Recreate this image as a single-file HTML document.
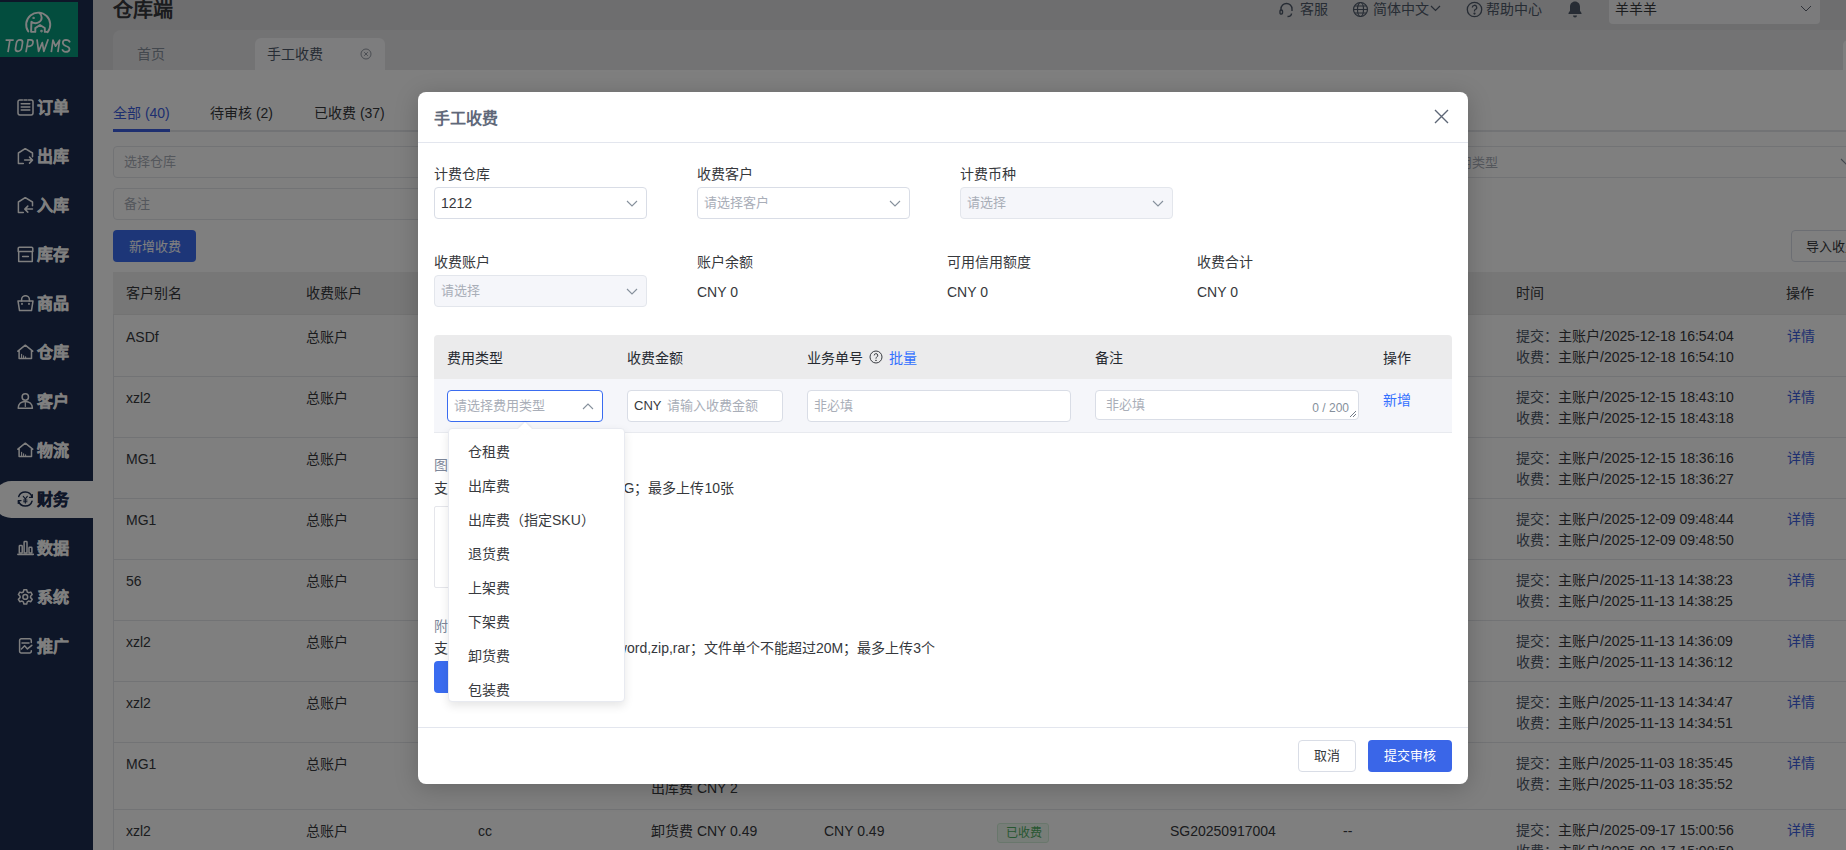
<!DOCTYPE html>
<html lang="zh-CN"><head><meta charset="utf-8"><style>
*{box-sizing:border-box;margin:0;padding:0}
html,body{width:1846px;height:850px;overflow:hidden;background:#fff;font-family:"Liberation Sans",sans-serif;font-size:14px;color:#36383c;position:relative}
.abs{position:absolute}
.t{position:absolute;white-space:nowrap}
#side{position:absolute;left:0;top:0;width:93px;height:850px;background:#1c2c50}
#logo{position:absolute;left:0;top:2px;width:78px;height:55px;background:#069a7c}
.mi{position:absolute;left:0;width:93px;height:37px;color:#fff;font-weight:bold;font-size:16px;line-height:37px}
.mi svg{position:absolute;left:17px;top:10px}
.mi span{position:absolute;left:37px;top:0;-webkit-text-stroke:0.3px currentColor}
.mi.act{background:#fff;color:#1c2c50;border-radius:19px 0 0 19px;left:-7px;width:100px}
.mi.act svg{left:24px}
.mi.act span{left:44px}
#hdr{position:absolute;left:93px;top:0;width:1753px;height:30px;background:#dcdcde}
#tabbar{position:absolute;left:93px;top:30px;width:1753px;height:40px;background:#dcdcde}
#tabc{position:absolute;left:113px;top:30px;width:1733px;height:40px;background:#e6e6e8;border-radius:8px 0 0 0}
#acttab{position:absolute;left:255px;top:38px;width:130px;height:32px;background:#fafafc;border-radius:6px 6px 0 0}
.ph{color:#a9aeb8}
.inp{position:absolute;border:1px solid #e5e6eb;border-radius:4px;background:#fff}
.blue{color:#3c5ee0}
#ov{position:absolute;left:0;top:0;width:1846px;height:850px;background:rgba(0,0,0,.5)}
#modal{position:absolute;left:418px;top:92px;width:1050px;height:692px;background:#fff;border-radius:8px;box-shadow:0 4px 24px rgba(0,0,0,.2)}
.lbl{position:absolute;white-space:nowrap;color:#36383c;font-size:14px;line-height:20px}
.sel{position:absolute;height:32px;border:1px solid #d9dde6;border-radius:4px;background:#fff}
.sel.dis{background:#f5f6fa;border-color:#e3e6ec}
.sel .v{position:absolute;left:6px;top:0;line-height:30px;font-size:13px;white-space:nowrap}
.chev{position:absolute;right:8px;top:12px}
#dd{position:absolute;left:448px;top:428px;width:177px;height:274px;background:#fff;border:1px solid #e8eaf0;border-radius:4px;box-shadow:0 4px 10px rgba(0,0,0,.1)}
#ddin{position:absolute;left:-1px;top:-1px;width:177px;height:274px;overflow:hidden;border-radius:4px}

</style></head><body>
<div id="side">
<div id="logo"></div>
<svg class="abs" style="left:0;top:0" width="80" height="60" viewBox="0 0 80 60" fill="none" stroke="#fff" stroke-width="1.9" stroke-linecap="round" stroke-linejoin="round">
  <path d="M28.3 31.5A12.05 12.05 0 1 1 47.6 32.2"/>
  <path d="M39.3 12.8C42.3 15 42.6 19.8 39.2 22C36.5 23.8 33.3 23.2 31.4 21.8L31.1 31.9H35.3V28.1L40 25L44.8 28V31.9H47.3"/>
  <circle cx="33.6" cy="17.9" r="0.45" stroke-width="1.5"/><circle cx="41.5" cy="31.1" r="0.5" stroke-width="1.6"/>
  <g stroke-width="1.7" stroke-linecap="butt" stroke-linejoin="miter">
   <path d="M5.6 40.1H13.7M9.9 40.1L8 52.2"/>
   <g transform="translate(0,52.2) skewX(-9.7)"><rect x="14.85" y="-12.25" width="6.1" height="11.4" rx="3.05"/>
   <path d="M26 0V-12.3H28.2A3.2 3.2 0 0 1 28.2 -5.9H26"/></g>
   <path d="M37 39.3L38.6 51.4L42.3 42.6L43.8 51.4L48.2 39.3" stroke-linejoin="round"/>
   <path d="M51.3 52.2L53 40.1L55.5 46.2L59.6 40.1L57.9 52.2" stroke-linejoin="round"/>
   <path d="M70 42.4C69.2 40.4 67.3 39.9 66 39.9C63.8 40 62.8 41.4 62.8 42.8C62.8 45 64.6 45.6 66.5 46.2C68.6 46.8 69.6 47.6 69.5 49.3C69.3 51.4 67.3 51.9 65.6 51.9C63.9 51.8 62.8 51.1 62.2 49.3"/>
  </g>
</svg>
<div class="mi" style="top:89px"><svg width="17" height="17" viewBox="0 0 17 17" fill="none" stroke="#fff" stroke-width="1.5" stroke-linecap="round" stroke-linejoin="round"><path d="M5.5 1H2.8A1.8 1.8 0 0 0 1 2.8v11.3a1.8 1.8 0 0 0 1.8 1.8h11.4a1.8 1.8 0 0 0 1.8-1.8V2.8A1.8 1.8 0 0 0 14.2 1H11.5M7 1h3"/><path d="M4.2 4.8h8.6M4.2 7.9h8.6M4.2 11h8.6"/></svg><span>订单</span></div>
<div class="mi" style="top:138px"><svg width="17" height="17" viewBox="0 0 17 17" fill="none" stroke="#fff" stroke-width="1.5" stroke-linecap="round" stroke-linejoin="round"><path d="M6.3 15.4H1.4V5L8.2 0.6L15.5 5V8.8"/><path d="M7.6 12.1H15.3M12.5 9.1l3 3-3 3"/></svg><span>出库</span></div>
<div class="mi" style="top:187px"><svg width="17" height="17" viewBox="0 0 17 17" fill="none" stroke="#fff" stroke-width="1.5" stroke-linecap="round" stroke-linejoin="round"><path d="M6.3 15.4H1.4V5L8.2 0.6L15.5 5V8.8"/><path d="M15.5 12.1H8M10.8 9.1l-3 3 3 3"/></svg><span>入库</span></div>
<div class="mi" style="top:236px"><svg width="17" height="17" viewBox="0 0 17 17" fill="none" stroke="#fff" stroke-width="1.5" stroke-linecap="round" stroke-linejoin="round"><path d="M1.2 5.6V2.4a1.2 1.2 0 0 1 1.2-1.2h12.2a1.2 1.2 0 0 1 1.2 1.2V5.6z"/><path d="M1.7 5.6V15.4H15.3V5.6M5.6 10.6h5.8"/></svg><span>库存</span></div>
<div class="mi" style="top:285px"><svg width="17" height="17" viewBox="0 0 17 17" fill="none" stroke="#fff" stroke-width="1.5" stroke-linecap="round" stroke-linejoin="round"><path d="M4.6 5.9V4.6a3.9 3.9 0 0 1 7.8 0v1.3"/><path d="M1 5.9H16L14.5 15.6H2.5z"/><path d="M5 8.7v.3M12 8.7v.3" stroke-width="1.8"/></svg><span>商品</span></div>
<div class="mi" style="top:334px"><svg width="17" height="17" viewBox="0 0 17 17" fill="none" stroke="#fff" stroke-width="1.5" stroke-linecap="round" stroke-linejoin="round"><path d="M0.9 7.2L8.3 1.2L15.7 7.2M2.1 6.2V14.6H14.5V6.2"/><path d="M4.6 10.2v3.6M6.6 11.8v2M8.6 12.8v1" stroke-width="1.1"/></svg><span>仓库</span></div>
<div class="mi" style="top:383px"><svg width="17" height="17" viewBox="0 0 17 17" fill="none" stroke="#fff" stroke-width="1.5" stroke-linecap="round" stroke-linejoin="round"><circle cx="8.3" cy="4" r="3.2"/><path d="M1.2 15.3C1.2 10.8 4.4 8.4 8.3 8.4S15.4 10.8 15.4 15.3Z"/><path d="M8.3 9.6v3.8" stroke-width="1.2"/></svg><span>客户</span></div>
<div class="mi" style="top:432px"><svg width="17" height="17" viewBox="0 0 17 17" fill="none" stroke="#fff" stroke-width="1.5" stroke-linecap="round" stroke-linejoin="round"><path d="M0.9 7.2L8.3 1.2L15.7 7.2M2.1 6.2V14.6H14.5V6.2"/><path d="M4.6 10.2v3.6M6.6 11.8v2M8.6 12.8v1" stroke-width="1.1"/></svg><span>物流</span></div>
<div class="mi act" style="top:481px"><svg width="17" height="17" viewBox="0 0 17 17" fill="none" stroke="#1c2c50" stroke-width="1.5" stroke-linecap="round" stroke-linejoin="round"><path d="M15 6A7 7 0 0 0 1.7 5.5M1.6 10A7 7 0 0 0 15 10.2"/><path d="M15.3 3.6V6.4H12.6M1.3 12.4V9.6H4" stroke-width="1.3"/><path d="M6.3 5.3l2 2.6 2-2.6M8.3 7.9v4.2M6.6 9h3.4M6.6 10.7h3.4" stroke-width="1.1"/></svg><span>财务</span></div>
<div class="mi" style="top:530px"><svg width="17" height="17" viewBox="0 0 17 17" fill="none" stroke="#fff" stroke-width="1.5" stroke-linecap="round" stroke-linejoin="round"><rect x="2.3" y="5.6" width="2.9" height="7.5" rx="0.7"/><rect x="7.1" y="1.6" width="2.9" height="11.5" rx="0.7"/><rect x="12" y="7.3" width="2.9" height="5.8" rx="0.7"/><path d="M1 14.3h15.2" stroke-width="1.8"/></svg><span>数据</span></div>
<div class="mi" style="top:579px"><svg width="17" height="17" viewBox="0 0 17 17" fill="none" stroke="#fff" stroke-width="1.5" stroke-linecap="round" stroke-linejoin="round"><path d="M6.31 2.99 L6.91 0.73 L9.69 0.73 L10.29 2.99 L11.56 3.72 L13.81 3.11 L15.20 5.52 L13.55 7.16 L13.55 8.64 L15.20 10.28 L13.81 12.69 L11.56 12.08 L10.29 12.81 L9.69 15.07 L6.91 15.07 L6.31 12.81 L5.04 12.08 L2.79 12.69 L1.40 10.28 L3.05 8.64 L3.05 7.16 L1.40 5.52 L2.79 3.11 L5.04 3.72Z"/><circle cx="8.3" cy="7.9" r="2.4"/></svg><span>系统</span></div>
<div class="mi" style="top:628px"><svg width="17" height="17" viewBox="0 0 17 17" fill="none" stroke="#fff" stroke-width="1.5" stroke-linecap="round" stroke-linejoin="round"><path d="M14.3 4.4V2.4a1.6 1.6 0 0 0-1.6-1.6H4.2a1.6 1.6 0 0 0-1.6 1.6v10.9a1.6 1.6 0 0 0 1.6 1.6h8.5a1.6 1.6 0 0 0 1.6-1.6v-0.5"/><path d="M5 4.9h7"/><path d="M4.4 11L7.6 7.7L10.4 10.9L14.8 7.3"/></svg><span>推广</span></div>
</div>
<div id="hdr"></div><div id="tabbar"></div><div id="tabc"></div><div class="abs" style="left:1843px;top:40px;width:10px;height:30px;background:#fff;border-radius:5px 0 0 0"></div>
<div class="t" style="left:113px;top:-2px;font-size:20px;font-weight:bold;line-height:24px;color:#36383c">仓库端</div>
<div id="acttab"></div>
<div class="t" style="left:137px;top:44px;line-height:20px;color:#86909c">首页</div>
<div class="t" style="left:267px;top:44px;line-height:20px;color:#4e5969">手工收费</div>
<svg class="abs" style="left:360px;top:48px" width="12" height="12" viewBox="0 0 12 12" fill="none" stroke="#8a919c" stroke-width="0.9"><circle cx="6" cy="6" r="5"/><path d="M4.2 4.2l3.6 3.6M7.8 4.2l-3.6 3.6"/></svg>
<svg class="abs" style="left:1278px;top:1px" width="17" height="17" viewBox="0 0 17 17" fill="none" stroke="#4e5969" stroke-width="1.4"><path d="M3 10V8a5.5 5.5 0 0 1 11 0v2"/><rect x="2" y="9" width="2.5" height="4" rx="1"/><path d="M13.5 12.5c0 2-2 3-4 3"/></svg>
<div class="t" style="left:1300px;top:-1px;line-height:20px;color:#4e5969">客服</div>
<svg class="abs" style="left:1352px;top:1px" width="17" height="17" viewBox="0 0 17 17" fill="none" stroke="#4e5969" stroke-width="1.2"><circle cx="8.5" cy="8.5" r="7"/><ellipse cx="8.5" cy="8.5" rx="3" ry="7"/><path d="M1.5 8.5h14M2.5 5h12M2.5 12h12"/></svg>
<div class="t" style="left:1373px;top:-1px;line-height:20px;color:#4e5969">简体中文</div>
<svg class="abs" style="left:1430px;top:5px" width="11" height="7" viewBox="0 0 11 7" fill="none" stroke="#4e5969" stroke-width="1.2"><path d="M1 1l4.5 4.5L10 1"/></svg>
<svg class="abs" style="left:1466px;top:1px" width="17" height="17" viewBox="0 0 17 17" fill="none" stroke="#4e5969" stroke-width="1.3"><circle cx="8.5" cy="8.5" r="7.2"/><path d="M6.3 6.5a2.2 2.2 0 1 1 3 2c-.6.3-.8.7-.8 1.4v.6"/><circle cx="8.5" cy="12.6" r=".5" fill="#4e5969"/></svg>
<div class="t" style="left:1486px;top:-1px;line-height:20px;color:#4e5969">帮助中心</div>
<svg class="abs" style="left:1567px;top:0px" width="16" height="18" viewBox="0 0 16 18" fill="#4e5969"><path d="M8 1.5c-3 0-5 2.3-5 5.3v4L1.5 13v1h13v-1L13 10.8v-4c0-3-2-5.3-5-5.3z"/><path d="M6 15.5a2 2 0 0 0 4 0z"/></svg>
<div class="abs" style="left:1609px;top:-4px;width:211px;height:28px;background:#f7f7f8;border-radius:4px"></div>
<div class="t" style="left:1615px;top:-1px;line-height:20px;color:#36383c">羊羊羊</div>
<svg class="abs" style="left:1800px;top:5px" width="12" height="7" viewBox="0 0 12 7" fill="none" stroke="#5c6370" stroke-width="1"><path d="M1 1l5 5 5-5"/></svg>
<div class="t blue" style="left:113px;top:103px;line-height:20px">全部 (40)</div>
<div class="t" style="left:210px;top:103px;line-height:20px;color:#36383c">待审核 (2)</div>
<div class="t" style="left:314px;top:103px;line-height:20px;color:#36383c">已收费 (37)</div>
<div class="abs" style="left:113px;top:130px;width:1733px;height:2px;background:#e5e6eb"></div>
<div class="abs" style="left:113px;top:129px;width:57px;height:3px;background:#3c5ee0"></div>
<div class="inp" style="left:113px;top:146px;width:1740px;height:32px"></div>
<div class="t ph" style="left:124px;top:152px;line-height:20px;font-size:13px">选择仓库</div>
<div class="t ph" style="left:1446px;top:153px;line-height:20px;font-size:13px">费用类型</div>
<svg class="abs" style="left:1840px;top:158px" width="12" height="7" viewBox="0 0 12 7" fill="none" stroke="#86909c" stroke-width="1.1"><path d="M1 1l5 5 5-5"/></svg>
<div class="inp" style="left:113px;top:188px;width:1200px;height:32px"></div>
<div class="t ph" style="left:124px;top:194px;line-height:20px;font-size:13px">备注</div>
<div class="abs" style="left:113px;top:230px;width:83px;height:32px;background:#3a6cf0;border-radius:4px"></div>
<div class="t" style="left:129px;top:237px;line-height:20px;font-size:13px;color:#fff">新增收费</div>
<div class="abs" style="left:1791px;top:230px;width:80px;height:32px;border:1px solid #d9dde6;background:#fff;border-radius:4px"></div>
<div class="t" style="left:1806px;top:237px;line-height:20px;font-size:13px;color:#36383c">导入收费</div>
<div class="abs" style="left:113px;top:272px;width:1733px;height:43px;background:#eeeeee;border-bottom:1px solid #e6e6e6"></div>
<div class="t" style="left:126px;top:283px;line-height:20px;color:#36383c">客户别名</div>
<div class="t" style="left:306px;top:283px;line-height:20px;color:#36383c">收费账户</div>
<div class="t" style="left:1516px;top:283px;line-height:20px;color:#36383c">时间</div>
<div class="t" style="left:1786px;top:283px;line-height:20px;color:#36383c">操作</div>
<div class="abs" style="left:113px;top:315px;width:1px;height:535px;background:#e5e6eb"></div>
<div class="abs" style="left:113px;top:376px;width:1733px;height:1px;background:#e5e6eb"></div>
<div class="t" style="left:126px;top:327px;line-height:21px">ASDf</div>
<div class="t" style="left:306px;top:327px;line-height:21px">总账户</div>
<div class="t" style="left:1516px;top:326px;line-height:21px"><span style="color:#4e5969">提交：</span>主账户/2025-12-18 16:54:04<br><span style="color:#4e5969">收费：</span>主账户/2025-12-18 16:54:10</div>
<div class="t blue" style="left:1786.5px;top:326px;line-height:21px">详情</div>
<div class="abs" style="left:113px;top:437px;width:1733px;height:1px;background:#e5e6eb"></div>
<div class="t" style="left:126px;top:388px;line-height:21px">xzl2</div>
<div class="t" style="left:306px;top:388px;line-height:21px">总账户</div>
<div class="t" style="left:1516px;top:387px;line-height:21px"><span style="color:#4e5969">提交：</span>主账户/2025-12-15 18:43:10<br><span style="color:#4e5969">收费：</span>主账户/2025-12-15 18:43:18</div>
<div class="t blue" style="left:1786.5px;top:387px;line-height:21px">详情</div>
<div class="abs" style="left:113px;top:498px;width:1733px;height:1px;background:#e5e6eb"></div>
<div class="t" style="left:126px;top:449px;line-height:21px">MG1</div>
<div class="t" style="left:306px;top:449px;line-height:21px">总账户</div>
<div class="t" style="left:1516px;top:448px;line-height:21px"><span style="color:#4e5969">提交：</span>主账户/2025-12-15 18:36:16<br><span style="color:#4e5969">收费：</span>主账户/2025-12-15 18:36:27</div>
<div class="t blue" style="left:1786.5px;top:448px;line-height:21px">详情</div>
<div class="abs" style="left:113px;top:559px;width:1733px;height:1px;background:#e5e6eb"></div>
<div class="t" style="left:126px;top:510px;line-height:21px">MG1</div>
<div class="t" style="left:306px;top:510px;line-height:21px">总账户</div>
<div class="t" style="left:1516px;top:509px;line-height:21px"><span style="color:#4e5969">提交：</span>主账户/2025-12-09 09:48:44<br><span style="color:#4e5969">收费：</span>主账户/2025-12-09 09:48:50</div>
<div class="t blue" style="left:1786.5px;top:509px;line-height:21px">详情</div>
<div class="abs" style="left:113px;top:620px;width:1733px;height:1px;background:#e5e6eb"></div>
<div class="t" style="left:126px;top:571px;line-height:21px">56</div>
<div class="t" style="left:306px;top:571px;line-height:21px">总账户</div>
<div class="t" style="left:1516px;top:570px;line-height:21px"><span style="color:#4e5969">提交：</span>主账户/2025-11-13 14:38:23<br><span style="color:#4e5969">收费：</span>主账户/2025-11-13 14:38:25</div>
<div class="t blue" style="left:1786.5px;top:570px;line-height:21px">详情</div>
<div class="abs" style="left:113px;top:681px;width:1733px;height:1px;background:#e5e6eb"></div>
<div class="t" style="left:126px;top:632px;line-height:21px">xzl2</div>
<div class="t" style="left:306px;top:632px;line-height:21px">总账户</div>
<div class="t" style="left:1516px;top:631px;line-height:21px"><span style="color:#4e5969">提交：</span>主账户/2025-11-13 14:36:09<br><span style="color:#4e5969">收费：</span>主账户/2025-11-13 14:36:12</div>
<div class="t blue" style="left:1786.5px;top:631px;line-height:21px">详情</div>
<div class="abs" style="left:113px;top:742px;width:1733px;height:1px;background:#e5e6eb"></div>
<div class="t" style="left:126px;top:693px;line-height:21px">xzl2</div>
<div class="t" style="left:306px;top:693px;line-height:21px">总账户</div>
<div class="t" style="left:1516px;top:692px;line-height:21px"><span style="color:#4e5969">提交：</span>主账户/2025-11-13 14:34:47<br><span style="color:#4e5969">收费：</span>主账户/2025-11-13 14:34:51</div>
<div class="t blue" style="left:1786.5px;top:692px;line-height:21px">详情</div>
<div class="abs" style="left:113px;top:809px;width:1733px;height:1px;background:#e5e6eb"></div>
<div class="t" style="left:126px;top:754px;line-height:21px">MG1</div>
<div class="t" style="left:306px;top:754px;line-height:21px">总账户</div>
<div class="t" style="left:1516px;top:753px;line-height:21px"><span style="color:#4e5969">提交：</span>主账户/2025-11-03 18:35:45<br><span style="color:#4e5969">收费：</span>主账户/2025-11-03 18:35:52</div>
<div class="t blue" style="left:1786.5px;top:753px;line-height:21px">详情</div>
<div class="abs" style="left:113px;top:870px;width:1733px;height:1px;background:#e5e6eb"></div>
<div class="t" style="left:126px;top:821px;line-height:21px">xzl2</div>
<div class="t" style="left:306px;top:821px;line-height:21px">总账户</div>
<div class="t" style="left:1516px;top:820px;line-height:21px"><span style="color:#4e5969">提交：</span>主账户/2025-09-17 15:00:56<br><span style="color:#4e5969">收费：</span>主账户/2025-09-17 15:00:59</div>
<div class="t blue" style="left:1786.5px;top:820px;line-height:21px">详情</div>
<div class="t" style="left:651px;top:778px;line-height:21px">出库费 CNY 2</div>
<div class="t" style="left:478px;top:821px;line-height:21px">cc</div>
<div class="t" style="left:651px;top:821px;line-height:21px">卸货费 CNY 0.49</div>
<div class="t" style="left:824px;top:821px;line-height:21px">CNY 0.49</div>
<div class="abs" style="left:997px;top:823px;width:52px;height:20px;background:#effbf1;border:1px solid #d2efd8;border-radius:3px"></div>
<div class="t" style="left:1006px;top:823px;line-height:20px;font-size:12px;color:#4fae63">已收费</div>
<div class="t" style="left:1170px;top:821px;line-height:21px">SG20250917004</div>
<div class="t" style="left:1343px;top:821px;line-height:21px">--</div>
<div id="ov"></div>
<div id="modal">
<div class="t" style="left:16px;top:16px;font-size:16px;font-weight:bold;line-height:22px;color:#606879">手工收费</div>
<svg class="abs" style="left:1015.5px;top:16.5px" width="15" height="15" viewBox="0 0 15 15" fill="none" stroke="#5d6676" stroke-width="1.35"><path d="M1 1l13 13M14 1L1 14"/></svg>
<div class="abs" style="left:0;top:50px;width:1050px;height:1px;background:#e3e6ee"></div>
<div class="lbl" style="left:16px;top:72px">计费仓库</div>
<div class="sel" style="left:16px;top:95px;width:213px;"><div class="v "><span style="color:#36383c;font-size:14px">1212</span></div><svg class="chev" width="12" height="7" viewBox="0 0 12 7" fill="none" stroke="#86909c" stroke-width="1.1"><path d="M1 1l5 5 5-5"/></svg></div>
<div class="lbl" style="left:279px;top:72px">收费客户</div>
<div class="sel" style="left:279px;top:95px;width:213px;"><div class="v ph">请选择客户</div><svg class="chev" width="12" height="7" viewBox="0 0 12 7" fill="none" stroke="#86909c" stroke-width="1.1"><path d="M1 1l5 5 5-5"/></svg></div>
<div class="lbl" style="left:542px;top:72px">计费币种</div>
<div class="sel dis" style="left:542px;top:95px;width:213px;"><div class="v ph">请选择</div><svg class="chev" width="12" height="7" viewBox="0 0 12 7" fill="none" stroke="#86909c" stroke-width="1.1"><path d="M1 1l5 5 5-5"/></svg></div>
<div class="lbl" style="left:16px;top:160px">收费账户</div>
<div class="sel dis" style="left:16px;top:183px;width:213px;"><div class="v ph">请选择</div><svg class="chev" width="12" height="7" viewBox="0 0 12 7" fill="none" stroke="#86909c" stroke-width="1.1"><path d="M1 1l5 5 5-5"/></svg></div>
<div class="lbl" style="left:279px;top:160px">账户余额</div>
<div class="lbl" style="left:279px;top:190px">CNY 0</div>
<div class="lbl" style="left:529px;top:160px">可用信用额度</div>
<div class="lbl" style="left:529px;top:190px">CNY 0</div>
<div class="lbl" style="left:779px;top:160px">收费合计</div>
<div class="lbl" style="left:779px;top:190px">CNY 0</div>
<div class="abs" style="left:16px;top:243px;width:1018px;height:44px;background:#ebebec;border-radius:4px 4px 0 0"></div>
<div class="abs" style="left:16px;top:287px;width:1018px;height:54px;background:#f5f6fa;border-bottom:1px solid #e8eaef"></div>
<div class="lbl" style="left:29px;top:256px;color:#262a31">费用类型</div>
<div class="lbl" style="left:209px;top:256px;color:#262a31">收费金额</div>
<div class="lbl" style="left:389px;top:256px;color:#262a31">业务单号</div>
<div class="lbl" style="left:677px;top:256px;color:#262a31">备注</div>
<div class="lbl" style="left:965px;top:256px;color:#262a31">操作</div>
<svg class="abs" style="left:451px;top:258px" width="14" height="14" viewBox="0 0 14 14" fill="none" stroke="#3a3d42" stroke-width="1"><circle cx="7" cy="7" r="6"/><path d="M5.2 5.4a1.8 1.8 0 1 1 2.5 1.7c-.5.2-.7.5-.7 1v.6"/><circle cx="7" cy="10.3" r=".35" fill="#3a3d42"/></svg>
<div class="lbl" style="left:471px;top:256px;color:#3370ff">批量</div>
<div class="sel" style="left:29px;top:298px;width:156px;border-color:#3a6cf0;"><div class="v ph">请选择费用类型</div><svg class="chev" width="12" height="7" viewBox="0 0 12 7" fill="none" stroke="#86909c" stroke-width="1.1"><path d="M1 6l5-5 5 5"/></svg></div>
<div class="sel" style="left:209px;top:298px;width:156px"><div class="v" style="color:#36383c">CNY</div><div class="v ph" style="left:39px">请输入收费金额</div></div>
<div class="sel" style="left:389px;top:298px;width:264px"><div class="v ph">非必填</div></div>
<div class="sel" style="left:677px;top:298px;width:264px;height:30px"><div class="v ph" style="left:10px;line-height:28px">非必填</div><div class="t" style="right:9px;top:9px;font-size:12px;line-height:16px;color:#86909c">0 / 200</div><svg class="abs" style="right:1px;bottom:1px" width="8" height="8" viewBox="0 0 8 8" stroke="#4e5969" stroke-width="0.8"><path d="M1 7l6-6M4 7l3-3"/></svg></div>
<div class="lbl" style="left:965px;top:298px;color:#3370ff">新增</div>
<div class="lbl" style="left:16px;top:363px;color:#7d879a">图片</div>
<div class="lbl" style="left:16px;top:386px">支持</div>
<div class="lbl" style="right:734px;top:386px">png,jpeg,JPG；最多上传10张</div>
<div class="abs" style="left:16px;top:414px;width:82px;height:82px;border:1px solid #e5e6eb;border-radius:2px"></div>
<div class="lbl" style="left:16px;top:524px;color:#7d879a">附件</div>
<div class="lbl" style="left:16px;top:546px">支持</div>
<div class="lbl" style="right:533px;top:546px">excel,word,zip,rar；文件单个不能超过20M；最多上传3个</div>
<div class="abs" style="left:16px;top:569px;width:82px;height:32px;background:#3a6cf0;border-radius:4px"></div>
<div class="abs" style="left:0;top:635px;width:1050px;height:1px;background:#e3e6ee"></div>
<div class="abs" style="left:880px;top:648px;width:58px;height:32px;border:1px solid #d9dde6;border-radius:4px"></div>
<div class="t" style="left:896px;top:654px;font-size:13px;line-height:20px;color:#36383c">取消</div>
<div class="abs" style="left:950px;top:648px;width:84px;height:32px;background:#3a66e8;border-radius:4px"></div>
<div class="t" style="left:966px;top:654px;font-size:13px;line-height:20px;color:#fff">提交审核</div>
</div>
<div id="dd">
<div class="abs" style="left:71px;top:-5px;width:10px;height:10px;background:#fff;transform:rotate(45deg);box-shadow:-1px -1px 2px rgba(0,0,0,.06)"></div>
<div id="ddin">
<div class="t" style="left:20px;top:14px;line-height:20px;color:#383a3e">仓租费</div>
<div class="t" style="left:20px;top:48px;line-height:20px;color:#383a3e">出库费</div>
<div class="t" style="left:20px;top:82px;line-height:20px;color:#383a3e">出库费（指定SKU）</div>
<div class="t" style="left:20px;top:116px;line-height:20px;color:#383a3e">退货费</div>
<div class="t" style="left:20px;top:150px;line-height:20px;color:#383a3e">上架费</div>
<div class="t" style="left:20px;top:184px;line-height:20px;color:#383a3e">下架费</div>
<div class="t" style="left:20px;top:218px;line-height:20px;color:#383a3e">卸货费</div>
<div class="t" style="left:20px;top:252px;line-height:20px;color:#383a3e">包装费</div>
<div class="t" style="left:20px;top:286px;line-height:20px;color:#383a3e">装卸费</div>
</div></div>
</body></html>
